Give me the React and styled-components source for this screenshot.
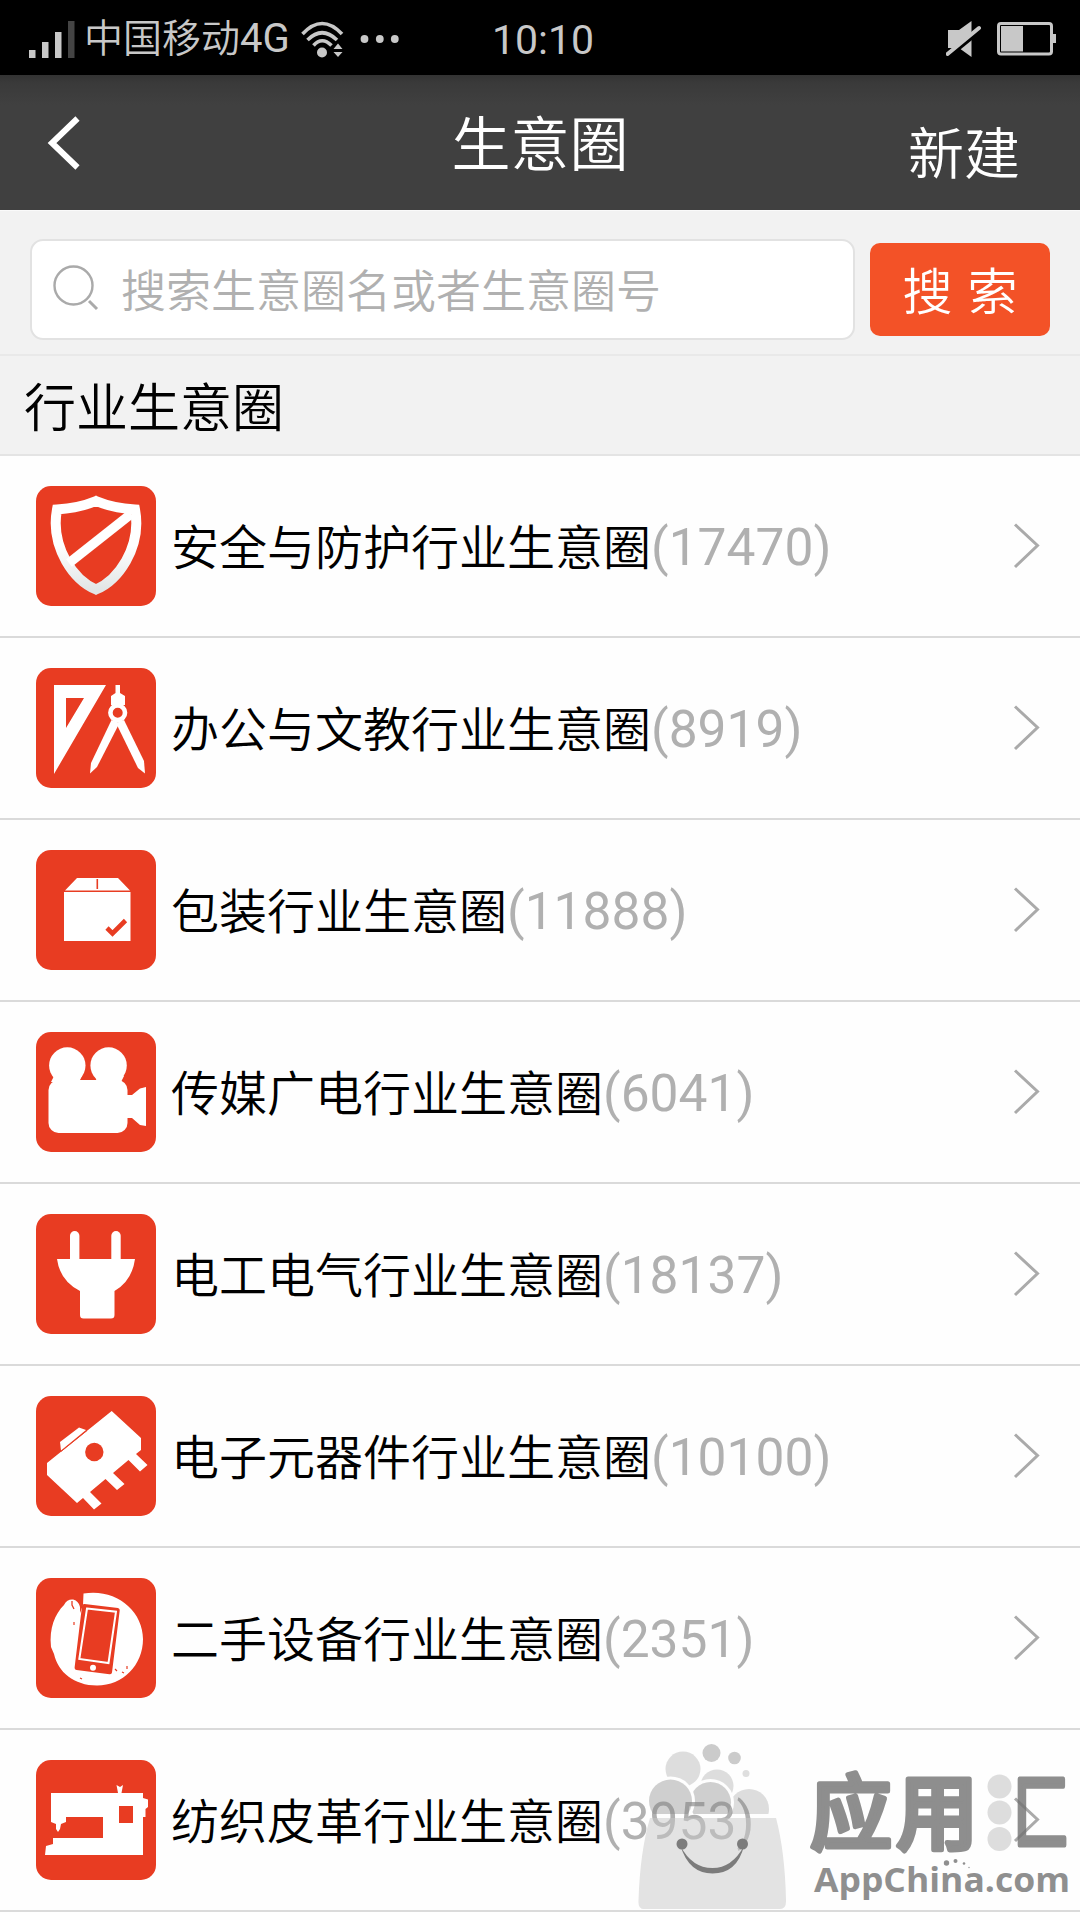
import styled, { createGlobalStyle } from "styled-components";
import { useState } from "react";

const circles = [
  { id: 1, icon: "shield", name: "安全与防护行业生意圈", count: 17470 },
  { id: 2, icon: "compass", name: "办公与文教行业生意圈", count: 8919 },
  { id: 3, icon: "box", name: "包装行业生意圈", count: 11888 },
  { id: 4, icon: "camera", name: "传媒广电行业生意圈", count: 6041 },
  { id: 5, icon: "plug", name: "电工电气行业生意圈", count: 18137 },
  { id: 6, icon: "chip", name: "电子元器件行业生意圈", count: 10100 },
  { id: 7, icon: "phone", name: "二手设备行业生意圈", count: 2351 },
  { id: 8, icon: "sewing", name: "纺织皮革行业生意圈", count: 3953 }
];

const RED = "#e83c22";

const iconShapes = {
  shield: (
    <>
      <defs>
        <linearGradient id="shieldFill" x1="0" y1="0" x2="0" y2="1">
          <stop offset="0.5" stopColor="#fff" />
          <stop offset="1" stopColor="#e2e6e6" />
        </linearGradient>
      </defs>
      <path
        d="M21 23.5 Q43 22 60 15 Q77 22 99 23.5 Q104 50 90 75 Q78 96 60 103.5 Q42 96 30 75 Q16 50 21 23.5 Z"
        fill="none"
        stroke="url(#shieldFill)"
        strokeWidth="10"
      />
      <path d="M33 77 L95 28" stroke="#fff" strokeWidth="9.5" />
    </>
  ),
  compass: (
    <>
      <path fillRule="evenodd" d="M18 17 H70 L18 106 Z M30 30 V60 L48 30 Z" />
      <path d="M79.5 17 H84 V25 L89 28 V37 H75 V28 L79.5 25 Z" />
      <circle cx="81.7" cy="44.7" r="7.3" fill={RED} stroke="#fff" strokeWidth="4.6" />
      <path d="M75.5 52 L83.5 55 L61 99 L54 105.5 L55 95 Z" />
      <path d="M80 55 L88 52 L108 93 L109 105.5 L102 100 Z" />
    </>
  ),
  box: (
    <>
      <path d="M29 40.5 L41 28 H82 L94 40.5 Z M28 42 H94.5 V91 H28 Z" />
      <path d="M61.3 29 V39" stroke={RED} strokeWidth="1.6" />
      <path d="M71 78 L76.5 83.5 L89.5 70.5" fill="none" stroke={RED} strokeWidth="4.6" />
    </>
  ),
  camera: (
    <>
      <circle cx="31.3" cy="33.5" r="18.2" />
      <circle cx="72.6" cy="33.5" r="18.2" />
      <rect x="12.5" y="48" width="79" height="53" rx="10" />
      <path d="M18 44 H46 L43 50 H15 Z M59 44 H88 L85 50 H61 Z" />
      <path d="M90 63 H96 L104 56.5 L110 55 V94 L104 93 L96 86 H90 Z" />
    </>
  ),
  plug: (
    <>
      <rect x="34" y="17" width="9.4" height="34" rx="4.7" />
      <rect x="75.3" y="17" width="9.4" height="34" rx="4.7" />
      <path d="M21 45 H99 Q96 67 78.5 77 V101 Q78.5 104.5 75 104.5 H47.5 Q44 104.5 44 101 V77 Q24 67 21 45 Z" />
    </>
  ),
  chip: (
    <>
      <path d="M75.7 15 L105 42 V54 L100 58 L111.5 69 L104 75.5 L92.5 64 L77 77 L88.5 88 L81 94 L69.5 83 L54 96 L65.5 107.5 L58 113.5 L47 102 L41 107 L11 79 V67 Z" />
      <path d="M25 54.5 L24 46 L43 31.5 L50 34 Z" />
      <path d="M25 55.5 L51 34.5" stroke={RED} strokeWidth="0.9" />
      <circle cx="58.3" cy="56" r="9.2" fill={RED} />
    </>
  ),
  phone: (
    <>
      <path d="M47.5 15.5 C79 10 107 32 107 61 C107 87 87 107.5 61 107.5 C38 107.5 22 94 18 76 L15 69 C13 50 19 36 28 27 C32 19 42 20 44 29 L44 35 L47 27 Z" />
      <path d="M36 23 V27 L38 31" fill="none" stroke={RED} strokeWidth="1.3" />
      <path d="M48.5 26 L82 30 Q84 30.5 83.7 32.5 L76 94.5 Q75.7 96.5 73.5 96.2 L40.5 92 Q38.3 91.5 38.6 89.5 L46 28 Q46.5 25.8 48.5 26 Z" fill={RED} />
      <path d="M51 30.5 L80 33.7 L72.5 85 L43.3 81 Z" fill="none" stroke="#fff" strokeWidth="2" />
      <circle cx="57" cy="89.8" r="3" />
      <path d="M38 44 V47 M79 91 L81 93 M86 94 L88 95 M91 88 V91 M44 100 L46 101" stroke={RED} strokeWidth="1.2" />
    </>
  ),
  sewing: (
    <>
      <path
        fillRule="evenodd"
        d="M15 33 H82 L80.5 25 L84 27 L87 25 L85.5 33 H107 V38 L112 39.5 V47 L109.5 49 V57 H107 V95 H9 L10 86 L17 84 V78 H67 V57 H30 V62 L25 64 L24 69 L22 72 L20 69 V64 L15 62 Z M83 46 V63 H97 V46 Z"
      />
    </>
  )
};

function CategoryIcon({ name }) {
  return (
    <IconTile viewBox="0 0 120 120" fill="#fff">
      {iconShapes[name]}
    </IconTile>
  );
}

function StatusBar() {
  return (
    <StatusBarRow>
      <StatusGroup>
        <svg width="46" height="38" viewBox="0 0 46 38" fill="#c8c8c8">
          <rect x="0" y="30" width="6.5" height="8" />
          <rect x="13" y="22" width="6.5" height="16" />
          <rect x="26" y="12" width="6.5" height="26" />
          <rect x="39" y="1" width="6.5" height="37" fill="#444" />
        </svg>
        <Carrier>中国移动<Latin>4G</Latin></Carrier>
        <svg width="43" height="37" viewBox="0 0 43 37" fill="none" stroke="#c8c8c8" strokeWidth="3.6">
          <path d="M1.5 13 Q21 -8 41 13" />
          <path d="M6.5 19 Q21 4.5 36 19" />
          <path d="M12.5 24.5 Q21 15 30.5 24.5" />
          <circle cx="21" cy="31.5" r="5" fill="#c8c8c8" stroke="none" />
          <path d="M32.5 28 L37 22.5 L41.5 28 Z M32.5 31 L37 36 L41.5 31 Z" fill="#c8c8c8" stroke="none" />
        </svg>
        <MoreDots viewBox="0 0 40 8" fill="#c8c8c8">
          <circle cx="4.5" cy="4" r="3.9" />
          <circle cx="19.8" cy="4" r="3.9" />
          <circle cx="34.8" cy="4" r="3.9" />
        </MoreDots>
      </StatusGroup>
      <Clock>10:10</Clock>
      <StatusGroup $end>
        <svg width="36" height="38" viewBox="0 0 36 38" fill="#c8c8c8">
          <path d="M2 10 H13 L25.5 1 V37 L13 28 H2 Z" />
          <path d="M2 37 L34 11" stroke="#000" strokeWidth="4" />
          <path d="M1.5 34 L33 8" stroke="#c8c8c8" strokeWidth="4" strokeLinecap="round" />
        </svg>
        <svg width="60" height="34" viewBox="0 0 60 34">
          <rect x="1.5" y="1.5" width="53" height="30.5" rx="2.5" fill="none" stroke="#c8c8c8" strokeWidth="3" />
          <rect x="4" y="4" width="22" height="25.5" fill="#c8c8c8" />
          <rect x="56" y="12" width="3" height="9" fill="#c8c8c8" />
        </svg>
      </StatusGroup>
    </StatusBarRow>
  );
}

function StoreBadge() {
  return (
    <Badge width="460" height="180" viewBox="0 0 460 180">
      <defs>
        <clipPath id="aboveBag">
          <rect width="180" height="74" />
        </clipPath>
        <mask id="behindLeft" maskUnits="userSpaceOnUse" x="0" y="0" width="180" height="80">
          <rect width="180" height="80" fill="#fff" />
          <circle cx="50.5" cy="61" r="24.5" />
        </mask>
        <mask id="behindMiddle" maskUnits="userSpaceOnUse" x="0" y="0" width="180" height="80">
          <rect width="180" height="80" fill="#fff" />
          <circle cx="90.5" cy="62.5" r="23.5" />
        </mask>
      </defs>
      <g fill="#808080" clipPath="url(#aboveBag)">
        <g mask="url(#behindLeft)">
          <circle cx="63" cy="29" r="17.5" fillOpacity="0.26" mask="url(#behindMiddle)" />
          <circle cx="90.5" cy="62.5" r="20.5" fillOpacity="0.37" />
        </g>
        <g mask="url(#behindMiddle)" fillOpacity="0.26">
          <circle cx="97" cy="46" r="16.5" />
          <circle cx="129" cy="69" r="20" />
        </g>
        <circle cx="50.5" cy="61" r="21.5" fillOpacity="0.37" />
        <circle cx="91.5" cy="13" r="9" fillOpacity="0.4" />
        <circle cx="114.5" cy="18" r="6.3" fillOpacity="0.4" />
        <circle cx="126" cy="33.5" r="3.5" fillOpacity="0.25" />
      </g>
      <path
        d="M30 78 H156 Q165 112 166 161 Q166 169 160 169 H24 Q18 169 18.5 161 Q20 112 30 78 Z"
        fill="#c8c8c8"
        fillOpacity="0.5"
      />
      <g fill="#7c7c7c">
        <circle cx="62" cy="104" r="5.5" />
        <circle cx="122.5" cy="104" r="5.5" />
        <path d="M60.5 106 Q72 128 92.5 128 Q112 128 124 106 Q117 133.5 92.5 133.5 Q69 133.5 60.5 106 Z" />
      </g>
      <g fill="#808080" fillOpacity="0.26">
        <circle cx="379.5" cy="46.5" r="12" />
        <circle cx="379.5" cy="72.5" r="12" />
        <circle cx="379.5" cy="99" r="12" />
      </g>
      <BadgeName x="190" y="103">应</BadgeName>
      <BadgeName x="276" y="103">用</BadgeName>
      <BadgeName transform="translate(393 103) scale(0.69 1)">匚</BadgeName>
      <BadgeSite x="194" y="152" textLength="256" lengthAdjust="spacingAndGlyphs">AppChina.com</BadgeSite>
      <g fill="#8f8f8f">
        <circle cx="326.5" cy="123" r="2.7" />
        <circle cx="335.5" cy="121" r="2" />
        <circle cx="344" cy="123.5" r="1.3" />
        <circle cx="349" cy="127.5" r="0.7" />
      </g>
    </Badge>
  );
}

function App() {
  const [keyword, setKeyword] = useState("");

  const handleKeyword = (event) => {
    setKeyword(event.target.value);
  };

  const handleSubmit = (event) => {
    event.preventDefault();
  };

  const filteredCircles = circles.filter(circle => circle.name.includes(keyword));

  return (
    <Screen>
      <GlobalStyle />
      <StatusBar />
      <Header>
        <BackButton type="button">
          <svg width="34" height="54" viewBox="0 0 34 54" fill="none" stroke="#fff" strokeWidth="6">
            <path d="M30.5 2.5 L5 27 L30.5 51.5" />
          </svg>
        </BackButton>
        <Title>生意圈</Title>
        <CreateButton type="button">新建</CreateButton>
      </Header>
      <SearchBar onSubmit={handleSubmit}>
        <SearchField>
          <svg width="48" height="48" viewBox="0 0 48 48" fill="none" stroke="#aaa" strokeWidth="2.4">
            <circle cx="20.5" cy="20.5" r="19" />
            <path d="M36 36 L44 44" strokeWidth="3" />
          </svg>
          <SearchInput value={keyword} onChange={handleKeyword} placeholder="搜索生意圈名或者生意圈号" />
        </SearchField>
        <SearchButton type="submit">搜 索</SearchButton>
      </SearchBar>
      <SectionTitle>行业生意圈</SectionTitle>
      <List>
        {filteredCircles.map(circle => (
          <Row key={circle.id}>
            <CategoryIcon name={circle.icon} />
            <Name>{circle.name}<Count>({circle.count})</Count></Name>
            <svg width="28" height="46" viewBox="0 0 28 46" fill="none" stroke="#aaa" strokeWidth="3">
              <path d="M2 1.5 L24.5 22.5 L2 44" />
            </svg>
          </Row>
        ))}
      </List>
      <StoreBadge />
    </Screen>
  );
}

export default App;

const GlobalStyle = createGlobalStyle`
  * {
    box-sizing: border-box;
  }

  body {
    margin: 0;
    background: #fefefe;
    font-family: "Noto Sans CJK SC", sans-serif;
    font-weight: 350;
  }

  svg {
    display: block;
    flex: none;
  }

  button, input {
    font: inherit;
    border: none;
    background: none;
    padding: 0;
  }
`;

const Screen = styled.div`
  position: relative;
  width: 1080px;
  height: 1920px;
  overflow: hidden;
`;

const StatusBarRow = styled.div`
  display: grid;
  grid-template-columns: 1fr auto 1fr;
  align-items: center;
  height: 75px;
  padding: 0 23px 0 29px;
  background: #000;
  color: #c8c8c8;
  font-size: 39px;
`;

const StatusGroup = styled.div`
  display: flex;
  align-items: center;
  justify-content: ${props => (props.$end ? "flex-end" : "flex-start")};
  gap: ${props => (props.$end ? "15px" : "9px")};
`;

const Carrier = styled.span`
  margin-right: 2px;
  padding-bottom: 4px;
  line-height: 71px;
`;

const Latin = styled.span`
  font-family: Roboto, sans-serif;
  font-size: 40px;
  font-weight: 400;
`;

const MoreDots = styled.svg`
  width: 40px;
  height: 8px;
  margin-left: 7px;
`;

const Clock = styled.span`
  padding-top: 1px;
  font-family: Roboto, sans-serif;
  font-size: 41px;
  font-weight: 400;
  line-height: 74px;
`;

const Header = styled.header`
  display: grid;
  grid-template-columns: 1fr auto 1fr;
  align-items: center;
  height: 135px;
  padding: 0 60px 0 47px;
  background: linear-gradient(#333 0, #3a3a3a 8px, #404040 30px);
  color: #fff;
`;

const BackButton = styled.button`
  justify-self: start;
`;

const Title = styled.h1`
  margin: 0;
  padding: 0 0 5px 13px;
  font-size: 59px;
  font-weight: inherit;
  line-height: 1;
`;

const CreateButton = styled.button`
  justify-self: end;
  padding-top: 14px;
  color: #fff;
  font-size: 56px;
  line-height: 1;
`;

const SearchBar = styled.form`
  display: flex;
  align-items: center;
  gap: 15px;
  height: 146px;
  padding: 13px 30px 0;
  border-top: 1px solid #fafafa;
  border-bottom: 2px solid #e9e9e9;
  background: #f2f2f2;
`;

const SearchField = styled.label`
  display: flex;
  flex: 1;
  align-items: center;
  gap: 20px;
  height: 101px;
  padding-left: 21px;
  border: 2px solid #e2e2e2;
  border-radius: 13px;
  background: #fff;
`;

const SearchInput = styled.input`
  flex: 1;
  min-width: 0;
  height: 90px;
  padding-bottom: 2px;
  outline: none;
  font-size: 45px;

  &::placeholder {
    color: #b0b0b0;
    opacity: 1;
  }
`;

const SearchButton = styled.button`
  width: 180px;
  height: 93px;
  padding-bottom: 2px;
  border-radius: 10px;
  background: #f35227;
  color: #fff;
  font-size: 50px;
  word-spacing: 4px;
  line-height: 1;
`;

const SectionTitle = styled.h2`
  height: 100px;
  margin: 0;
  padding-left: 24px;
  border-bottom: 2px solid #e4e4e4;
  background: #f2f2f2;
  color: #000;
  font-size: 52px;
  font-weight: inherit;
  line-height: 98px;
`;

const List = styled.ul`
  margin: 0;
  padding: 0;
  list-style: none;
`;

const Row = styled.li`
  display: flex;
  align-items: center;
  height: 182px;
  padding: 0 39px 0 36px;
  border-bottom: 2px solid #dadada;
`;

const IconTile = styled.svg`
  width: 120px;
  height: 120px;
  border-radius: 15px;
  background: ${RED};
`;

const Name = styled.span`
  flex: 1;
  padding-left: 15px;
  color: #000;
  font-size: 48px;
  line-height: 60px;
  white-space: nowrap;
`;

const Count = styled.span`
  color: #b0b0b0;
  font-family: Roboto, sans-serif;
  font-size: 51.5px;
  font-weight: 400;
`;

const Badge = styled.svg`
  position: absolute;
  left: 620px;
  bottom: 0;
  pointer-events: none;
`;

const BadgeName = styled.text`
  fill: #737373;
  stroke: #737373;
  stroke-width: 5px;
  stroke-linejoin: round;
  opacity: 0.8;
  font-size: 82px;
  font-weight: 500;
`;

const BadgeSite = styled.text`
  fill: #8f8f8f;
  font-family: "Open Sans", sans-serif;
  font-size: 34px;
  font-weight: 700;
`;
